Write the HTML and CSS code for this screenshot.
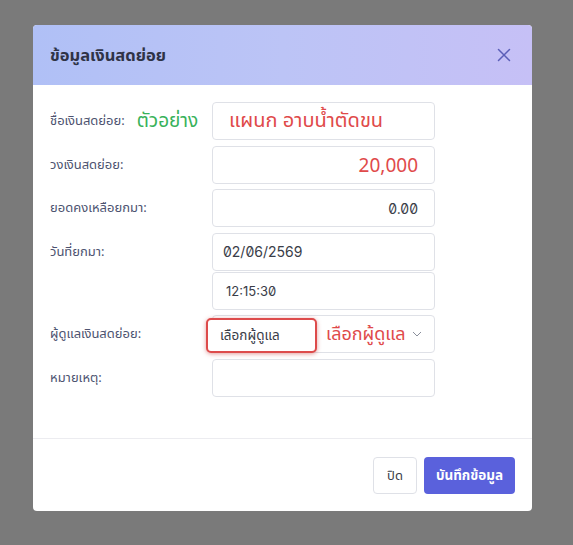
FILE: index.html
```html
<!DOCTYPE html>
<html lang="th">
<head>
<meta charset="utf-8">
<link rel="stylesheet" href="styles.css">
</head>
<body>
<div class="modal">
  <div class="modal-header">
    <h1 class="title">ข้อมูลเงินสดย่อย</h1>
    <svg class="close" width="14" height="14" viewBox="0 0 14 14"><path d="M1.5 1.5 L12.5 12.5 M12.5 1.5 L1.5 12.5" stroke="#5b5fb8" stroke-width="1.5" stroke-linecap="round"/></svg>
  </div>
  <div class="modal-body">
    <div class="row">
      <div class="label">ชื่อเงินสดย่อย: <span class="note-green">ตัวอย่าง</span></div>
      <div class="input"><span class="red-big">แผนก อาบน้ำตัดขน</span></div>
    </div>
    <div class="row">
      <div class="label">วงเงินสดย่อย:</div>
      <div class="input right"><span class="red-num">20,000</span></div>
    </div>
    <div class="row">
      <div class="label">ยอดคงเหลือยกมา:</div>
      <div class="input right"><span class="num">0.00</span></div>
    </div>
    <div class="row top">
      <div class="label tall">วันที่ยกมา:</div>
      <div class="stack">
        <div class="input"><span class="num date">02/06/2569</span></div>
        <div class="input"><span class="num time">12:15:30</span></div>
      </div>
    </div>
    <div class="row">
      <div class="label">ผู้ดูแลเงินสดย่อย:</div>
      <div class="input select">
        <span class="hl">เลือกผู้ดูแล</span>
        <span class="red-sel">เลือกผู้ดูแล</span>
        <svg class="chev" width="10" height="6" viewBox="0 0 10 6"><path d="M1 1 L5 5 L9 1" fill="none" stroke="#8a8f9c" stroke-width="1"/></svg>
      </div>
    </div>
    <div class="row">
      <div class="label">หมายเหตุ:</div>
      <div class="input"></div>
    </div>
  </div>
  <div class="modal-footer">
    <button class="btn btn-light">ปิด</button>
    <button class="btn btn-primary">บันทึกข้อมูล</button>
  </div>
</div>
</body>
</html>
```
FILE: styles.css
```css
* { box-sizing: border-box; }
html, body { margin: 0; padding: 0; }
body {
  background: #7a7a7a;
  font-family: "Noto Sans", "Noto Sans Thai", "DejaVu Sans", sans-serif;
  width: 573px;
  height: 545px;
  overflow: hidden;
  padding: 25px 0 0 33px;
}
.modal {
  width: 499px;
  height: 486px;
  background: #fff;
  border-radius: 4px;
  overflow: hidden;
  display: flex;
  flex-direction: column;
}
.modal-header {
  height: 60px;
  background: linear-gradient(90deg, #b0c0f6 0%, #bcc4f6 50%, #c6c0f6 100%);
  display: flex;
  align-items: center;
  justify-content: space-between;
  padding: 0 21px 0 17px;
}
.title {
  margin: 0;
  font-size: 16.5px;
  font-weight: 700;
  color: #2f3346;
}
.modal-body {
  padding: 17px 0 0 17px;
  height: 354px;
  border-bottom: 1px solid #ececf0;
  display: flex;
  flex-direction: column;
  gap: 5.5px;
}
.row {
  display: grid;
  grid-template-columns: 162px 223px;
  align-items: center;
}
.row.top { align-items: start; }
.label {
  font-size: 13px;
  color: #4d5370;
  display: flex;
  align-items: center;
  gap: 12px;
}
.label.tall { height: 38px; }
.note-green {
  color: #38b25a;
  font-size: 19px;
}
.stack {
  display: flex;
  flex-direction: column;
  gap: 1px;
}
.input {
  height: 38px;
  border: 1px solid #dfe1e7;
  border-radius: 4px;
  display: flex;
  align-items: center;
  padding: 0 16px;
  position: relative;
}
.input.right { justify-content: flex-end; }
.red-big {
  color: #e04a4a;
  font-size: 20px;
}
.red-num {
  color: #e04a4a;
  font-size: 19px;
}
.num {
  font-family: Inter, "Noto Sans", sans-serif;
  font-feature-settings: "zero" 1;
  font-size: 14px;
  color: #3a3d48;
}
.date { margin-left: -6px; }
.time { font-size: 13px; margin-left: -3px; }
.select { padding: 0 12px 0 0; }
.hl {
  position: absolute;
  left: -7px;
  top: 2px;
  width: 111px;
  height: 35px;
  border: 2px solid #dd4b4b;
  border-radius: 5px;
  background: #fff;
  box-shadow: 0 1px 4px rgba(200,60,60,0.5);
  font-size: 13.5px;
  color: #3a3d48;
  display: flex;
  align-items: center;
  padding-left: 12px;
}
.red-sel {
  margin-left: 113px;
  color: #e04a4a;
  font-size: 18px;
}
.chev { margin-left: auto; }
.modal-footer {
  flex: 1;
  display: flex;
  justify-content: flex-end;
  align-items: flex-start;
  gap: 7px;
  padding: 18px 17px 0 0;
}
.btn {
  height: 37px;
  border-radius: 4px;
  font-family: inherit;
  font-size: 13px;
  cursor: pointer;
}
.btn-light {
  width: 44px;
  background: #fff;
  border: 1px solid #dfe1e7;
  color: #3a3d48;
}
.btn-primary {
  width: 91px;
  background: #5a61dc;
  border: none;
  color: #fff;
  font-weight: 700;
  font-size: 13.5px;
}
```
